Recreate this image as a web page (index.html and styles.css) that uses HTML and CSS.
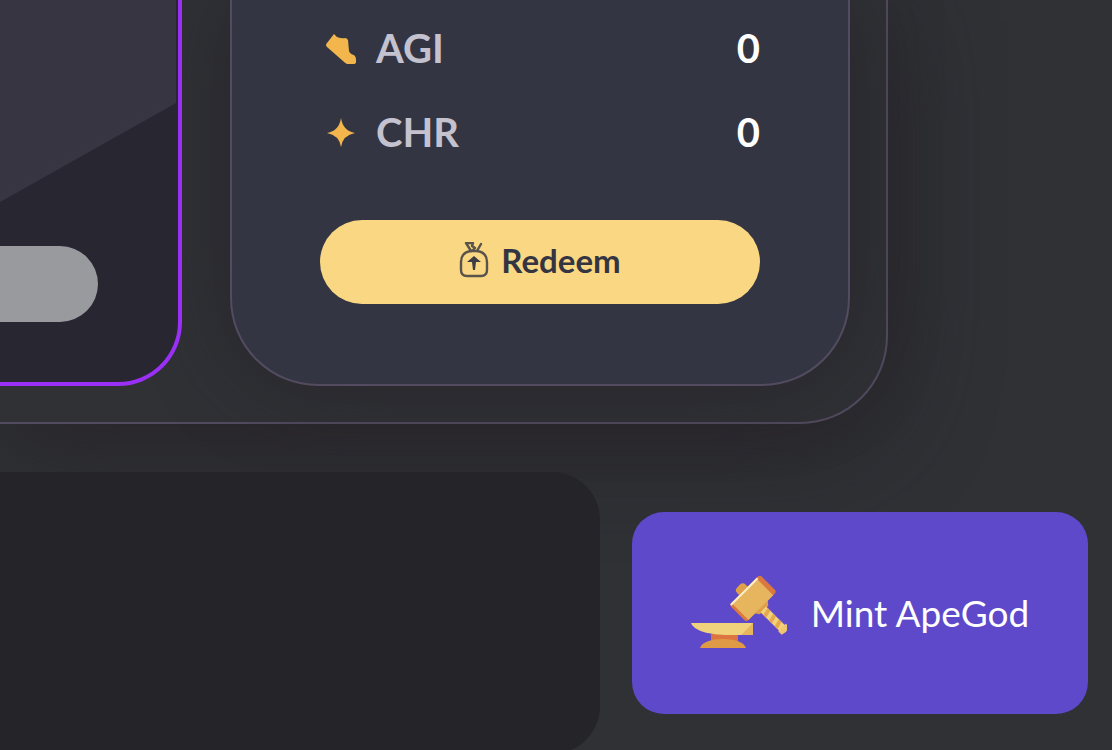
FILE: index.html
```html
<!DOCTYPE html>
<html lang="en">
<head>
    <meta charset="UTF-8">
    <meta name="viewport" content="width=device-width, initial-scale=1.0">
    <title>ApeGod</title>
    <link rel="stylesheet" href="styles.css">
</head>
<body>
    <section class="panel">
        <div class="ape-card">
            <div class="ape-art"></div>
            <button type="button" class="ape-button" aria-label="Select" disabled></button>
        </div>

        <div class="stats-card">
            <dl class="stats">
                <div class="stat">
                    <dt>
                        <svg class="stat-icon" viewBox="0 0 40 40" aria-hidden="true">
                            <path fill="#f2b64c" d="M14 6 L17 9 Q22 11 26 10 L28 12 L29 23 Q30 26 34 27 Q36 29 36 31 L36 34 Q36 36 33 36 L27 36 Q25 35 23 33 L7 19 Q5 17 7 15 Z"/>
                        </svg>
                        AGI
                    </dt>
                    <dd>0</dd>
                </div>
                <div class="stat">
                    <dt>
                        <svg class="stat-icon" viewBox="0 0 40 40" aria-hidden="true">
                            <path fill="#f2b64c" d="M21 6 Q23 19 35 21 Q23 23 21 35 Q19 23 7 21 Q19 19 21 6 Z"/>
                        </svg>
                        CHR
                    </dt>
                    <dd>0</dd>
                </div>
            </dl>
            <button type="button" class="redeem-button">
                <svg class="redeem-icon" viewBox="0 0 30 36" aria-hidden="true">
                    <g fill="none" stroke="#5a534c" stroke-width="2.4" stroke-linejoin="round" stroke-linecap="round">
                        <path d="M12 9 C5 10 2 14 2 20 L2 28 Q2 34 8 34 L22 34 Q28 34 28 28 L28 20 C28 14 25 10 18 9 Z"/>
                        <path d="M12 9 L7 1 L14 1 L13 4 L16 6 L13 9 M18 9 L22 2"/>
                    </g>
                    <path fill="#3d3c44" d="M15 14 L22 20 L17 20 L16 28 L14 28 L13 20 L8 20 Z"/>
                </svg>
                Redeem
            </button>
        </div>
    </section>

    <section class="mint-row">
        <div class="mint-box"></div>
        <button type="button" class="mint-button">
            <svg class="mint-icon" viewBox="0 0 96 72" aria-hidden="true">
                <!-- anvil -->
                <rect x="20" y="58" width="27" height="9" fill="#dc7540"/>
                <path fill="#e09a45" d="M9 72 C12 60 52 60 55 72 Z"/>
                <path fill="#efd27b" d="M0 47 L62 47 L62 59 L38 59 C18 59 3 55 0 47 Z"/>
                <path fill="#e6b55d" d="M62 47 L62 59 L50 59 Z"/>
                <!-- hammer -->
                <g transform="translate(61 22) rotate(-45)">
                    <rect x="-7" y="-18" width="12" height="10" rx="4" fill="#dfa049"/>
                    <path fill="#dfa049" d="M-11 10 L12 10 L6 17 L-6 17 Z"/>
                    <rect x="-4" y="16" width="8" height="30" fill="#f0d27a"/>
                    <path fill="#e6a74f" d="M-4 20 L4 18 L4 22 L-4 24 Z M-4 28 L4 26 L4 30 L-4 32 Z M-4 36 L4 34 L4 38 L-4 40 Z"/>
                    <path fill="#efc66e" d="M-5 42 L6 42 L5 47 L0 48 L-5 47 Z"/>
                    <rect x="-21" y="-11" width="43" height="24" rx="3" fill="#db783f"/>
                    <rect x="-18" y="-11" width="35" height="24" fill="#e6b55d"/>
                    <rect x="-20" y="-11" width="38" height="2" fill="#fbeecb"/>
                </g>
            </svg>
            Mint ApeGod
        </button>
    </section>
</body>
</html>
```
FILE: styles.css
```css
* {
    box-sizing: border-box;
}

body {
    font-family: Lato, "Open Sans", sans-serif;
    background-color: #2f3135;
    color: #fff;
    margin: 0;
    min-height: 100vh;
    overflow: hidden;
}

button {
    font-family: inherit;
    border: none;
    padding: 0;
    cursor: pointer;
}

.panel {
    display: flex;
    gap: 48px;
    margin-right: 224px;
    padding: 0 36px 36px 0;
    border: solid #534b60;
    border-width: 0 2px 2px 0;
    border-radius: 0 0 88px 0;
    box-shadow: 0 20px 100px rgba(37, 32, 38, 0.8);
}

.ape-card {
    position: relative;
    z-index: 1;
    flex: 1;
    min-width: 0;
    background-color: #272631;
    border: solid #9a30f6;
    border-width: 0 4px 4px 0;
    border-radius: 0 0 64px 0;
}

.ape-art {
    height: 202px;
    margin-right: 2px;
    background: linear-gradient(151deg, #373541 60%, #353743);
    clip-path: polygon(0 0, 100% 0, 100% 51%, 0 100%);
}

.ape-button {
    display: block;
    width: calc(100% - 80px);
    height: 76px;
    margin-top: 44px;
    background-color: #999a9e;
    border-radius: 0 38px 38px 0;
}

.stats-card {
    flex: 0 0 620px;
    padding: 6px 88px 80px;
    background-color: #343542;
    border: solid #534b60;
    border-width: 0 2px 2px;
    border-radius: 0 0 88px 88px;
    box-shadow: 0 0 80px rgba(37, 32, 38, 0.7);
}

.stats {
    margin: 0 0 46px;
    font-size: 40px;
    font-weight: bold;
    line-height: 84px;
}

.stat {
    display: flex;
    justify-content: space-between;
}

.stat dt {
    display: flex;
    align-items: center;
    gap: 16px;
    color: #c4c2cf;
}

.stat dd {
    margin: 0;
}

.stat-icon {
    width: 40px;
    height: 40px;
}

.redeem-button {
    display: flex;
    align-items: center;
    justify-content: center;
    gap: 12px;
    width: 100%;
    height: 84px;
    padding-bottom: 4px;
    background-color: #fad782;
    color: #343542;
    border-radius: 42px;
    font-size: 33px;
    font-weight: bold;
}

.redeem-icon {
    width: 30px;
    height: 36px;
}

.mint-row {
    display: flex;
    align-items: center;
    gap: 32px;
    margin-top: 48px;
    padding-right: 24px;
}

.mint-box {
    flex: 1;
    height: 282px;
    background-color: #252429;
    border-radius: 0 48px 48px 0;
}

.mint-button {
    display: flex;
    align-items: center;
    justify-content: center;
    gap: 24px;
    flex: 0 0 456px;
    height: 202px;
    padding-bottom: 2px;
    background-color: #5d49ca;
    color: #fff;
    border-radius: 32px;
    font-size: 37px;
}

.mint-icon {
    width: 96px;
    height: 72px;
}
```
